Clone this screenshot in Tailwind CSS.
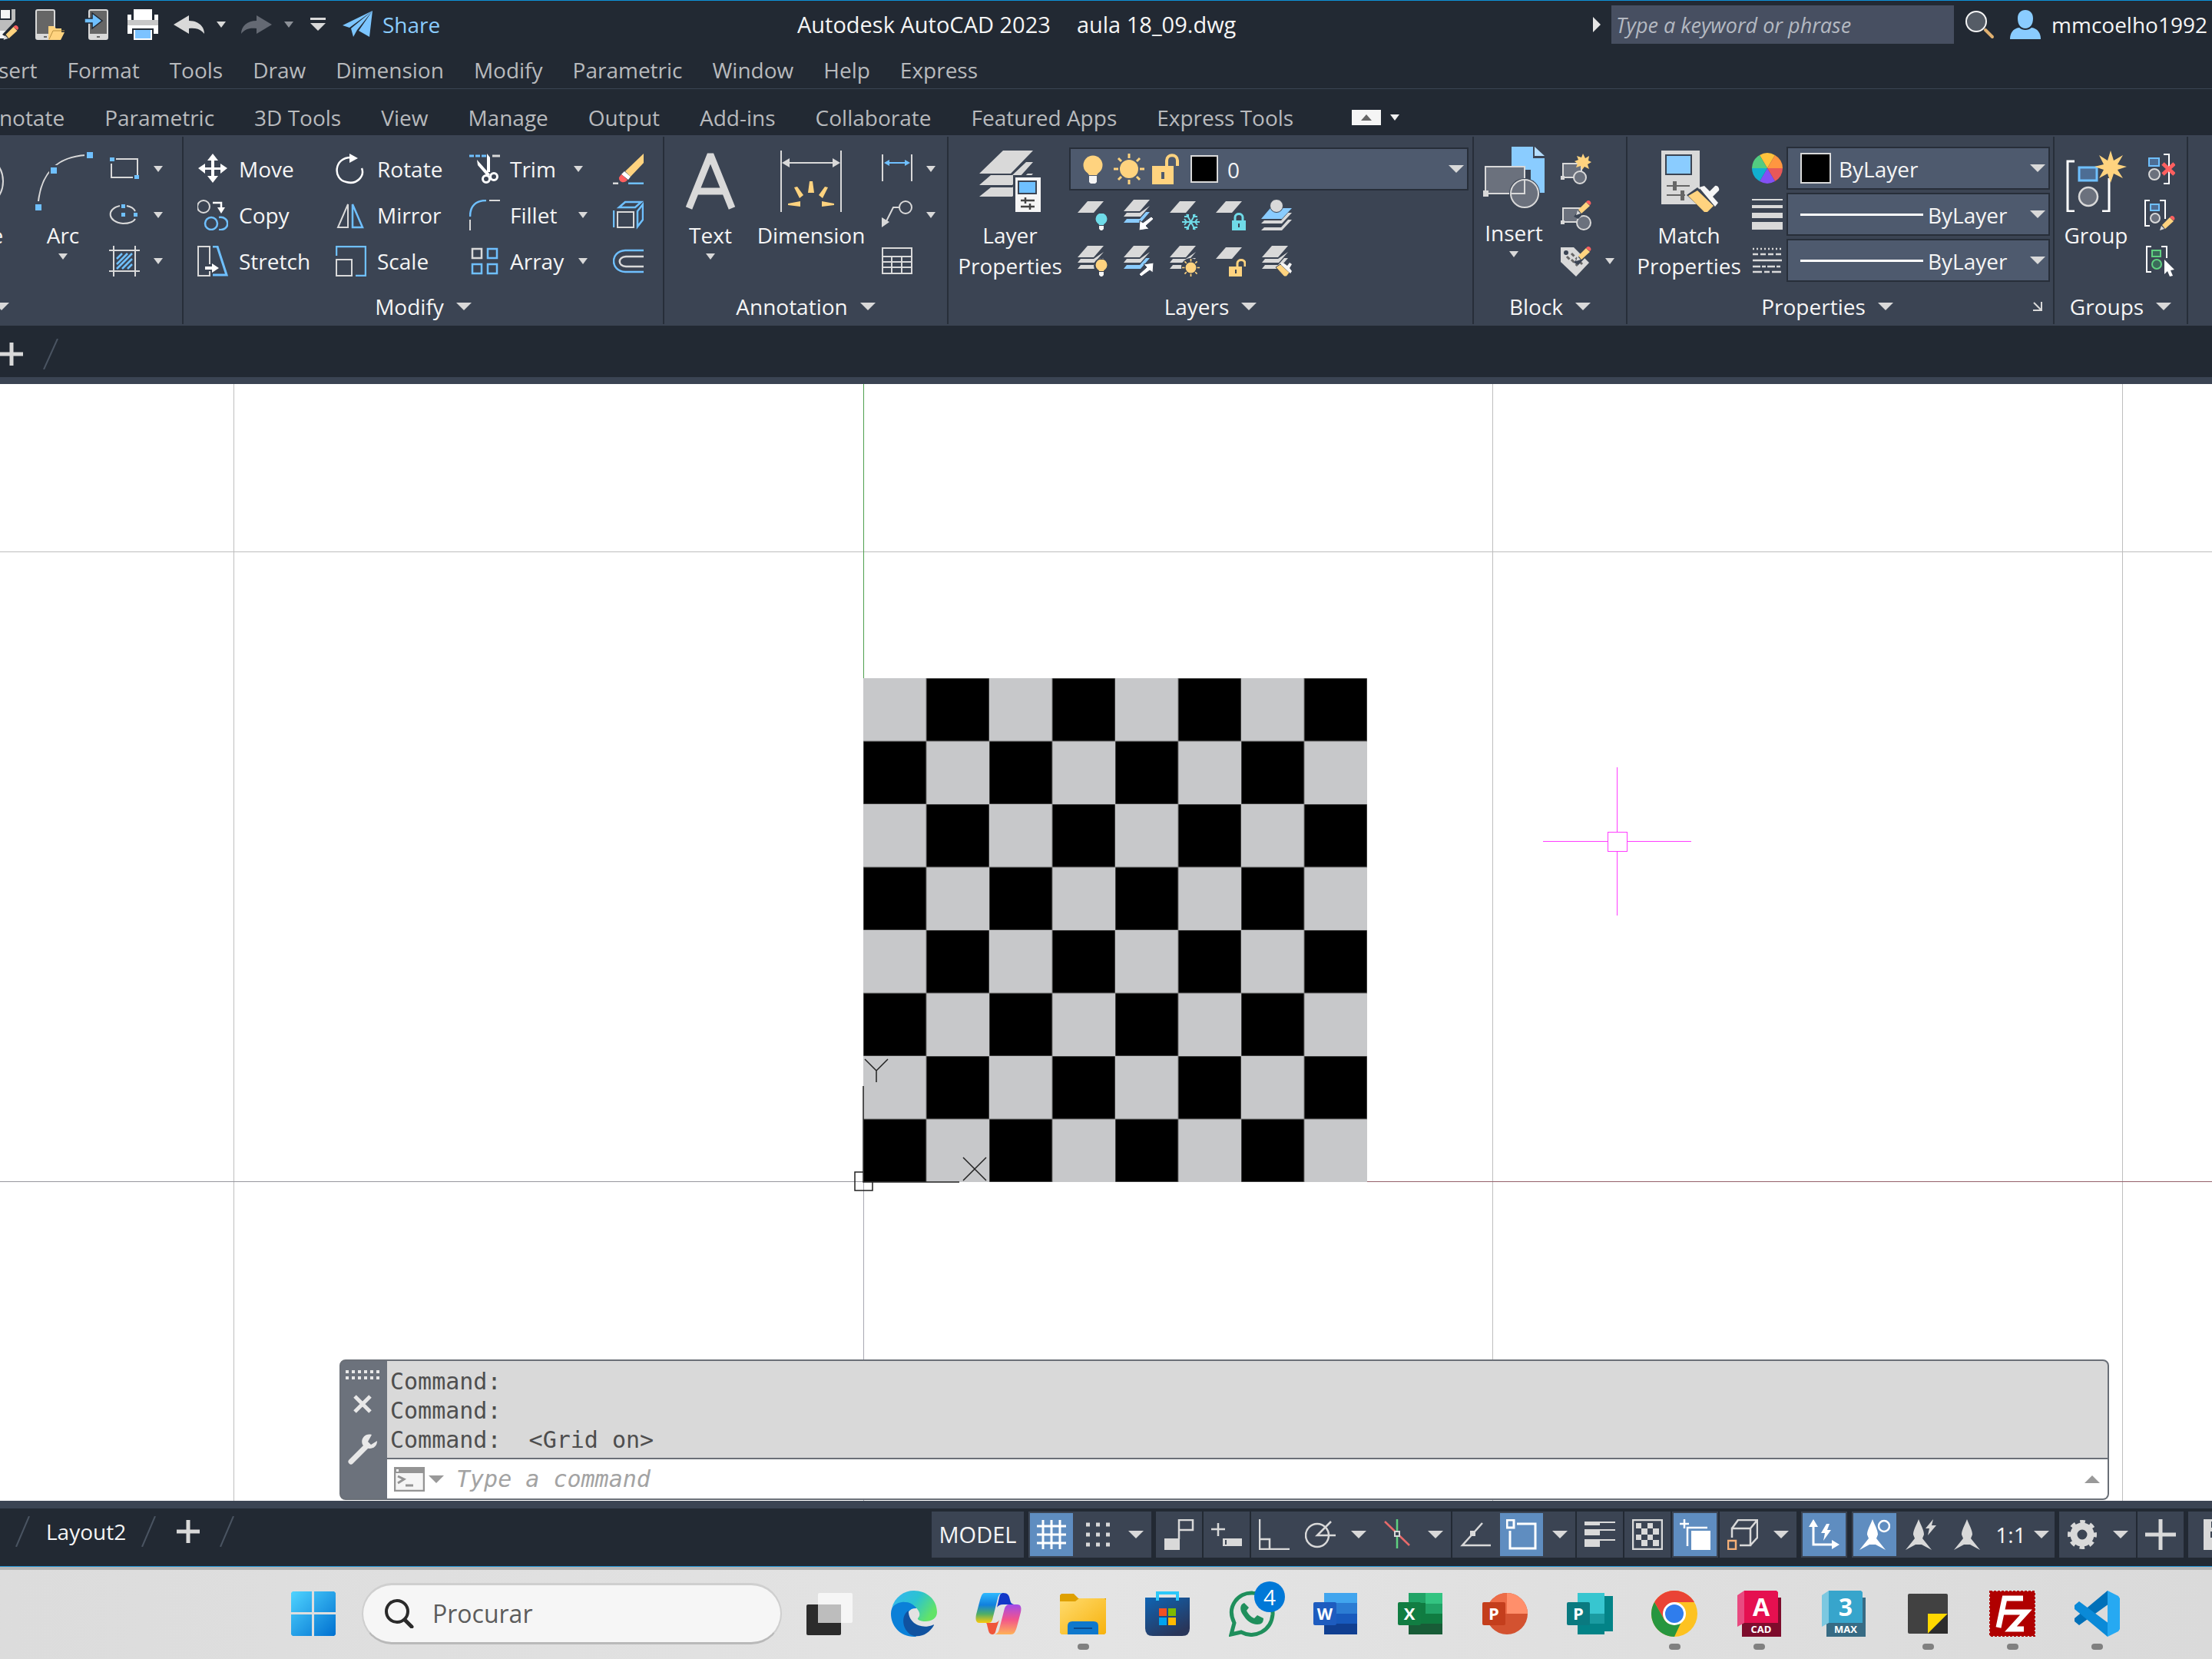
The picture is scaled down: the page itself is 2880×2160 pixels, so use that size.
<!DOCTYPE html>
<html lang="en">

<head>
    <meta charset="UTF-8">
    <meta name="viewport" content="width=device-width, initial-scale=1.0">
    <title>Autodesk AutoCAD 2023 - aula 18_09.dwg</title>
    <script src="https://cdn.jsdelivr.net/npm/@tailwindcss/browser@4"></script>
</head>

<body class="flex h-screen flex-col overflow-hidden bg-[#222933] font-['Open_Sans',sans-serif] text-[28px] leading-[40px] text-[#f5f5f5]">

    <!-- Shared icon parts -->
    <svg class="absolute h-0 w-0">
        <symbol id="caret" viewBox="0 0 20 10" preserveAspectRatio="none"><path d="M0 0h20L10 10z" fill="currentColor" /></symbol>
        <symbol id="pencil" viewBox="0 0 20 20">
            <path d="M0 20l2-6 4 4z" fill="#d9d9d9" />
            <path d="M3 13L13 3l5 5L7 18z" fill="#ffd37f" />
            <path d="M14 2c2-3 7 1 5 4l-1 1-5-4z" fill="#ff5f5f" />
        </symbol>
        <symbol id="sheet" viewBox="0 0 34 15"><path d="M13 0h21L21 15H0z" fill="currentColor" /></symbol>
        <symbol id="stack" viewBox="0 0 40 30">
            <path d="M14 0h21L22 15H1z" fill="#d9d9d9" />
            <path d="M35 8L23 22H1l4-5h17z" fill="#d9d9d9" />
            <path d="M35 16L23 30H1l4-5h17l8-9z" fill="currentColor" />
        </symbol>
        <symbol id="bulb" viewBox="0 0 16 22">
            <circle cx="8" cy="7" r="7.500" fill="currentColor" />
            <path d="M3 9h10l-2 6H5z" fill="currentColor" />
            <path d="M5 16h6v4l-2 2H7l-2-2z" fill="#f5f5f5" />
        </symbol>
        <symbol id="sun" viewBox="0 0 40 40">
            <circle cx="20" cy="20" r="12" fill="#ffd37f" />
            <path d="M20 0v6M20 34v6M0 20h6M34 20h6M6 6l4 4M30 30l4 4M34 6l-4 4M10 30l-4 4" stroke="#ffd37f" stroke-width="3" />
        </symbol>
        <symbol id="block" viewBox="0 0 40 40">
            <path d="M3 13h24v18H3z" fill="#6b717d" stroke="#d9d9d9" stroke-width="2" />
            <path d="M0 29h5v5H0z" fill="#d9d9d9" />
        </symbol>
        <symbol id="compass" viewBox="0 0 40 40">
            <path d="M20 0c3 8 7 14 7 20l-2 5 12 15-13-7h-8L3 40l12-15-2-5c0-6 4-12 7-20z" fill="currentColor" />
        </symbol>
        <defs>
            <linearGradient id="winGrad" x1="0" y1="0" x2="1" y2="1"><stop offset="0" stop-color="#4fd4ff" /><stop offset="1" stop-color="#0070d0" /></linearGradient>
            <linearGradient id="edgeTop" x1="0" y1="0" x2="1" y2=".5"><stop offset="0" stop-color="#35b4f5" /><stop offset=".55" stop-color="#2cc3d0" /><stop offset="1" stop-color="#62e368" /></linearGradient>
            <linearGradient id="copLeft" x1="0" y1="0" x2="0" y2="1"><stop offset="0" stop-color="#2fb9ff" /><stop offset=".4" stop-color="#1180dd" /><stop offset=".7" stop-color="#4fae67" /><stop offset="1" stop-color="#fcca0a" /></linearGradient>
            <linearGradient id="copRight" x1="0" y1="0" x2="0" y2="1"><stop offset="0" stop-color="#a24bea" /><stop offset=".5" stop-color="#f2548c" /><stop offset="1" stop-color="#ffb257" /></linearGradient>
            <linearGradient id="folder" x1="0" y1="0" x2="1" y2="1"><stop offset="0" stop-color="#ffdb6e" /><stop offset="1" stop-color="#f7b20c" /></linearGradient>
            <linearGradient id="store" x1="0" y1="0" x2=".6" y2="1"><stop offset="0" stop-color="#0f64b4" /><stop offset="1" stop-color="#29365a" /></linearGradient>
        </defs>
    </svg>

    <!-- Title bar -->
    <header class="flex h-[69px] shrink-0 items-start border-t border-[#0d92d8] pt-[11px] whitespace-nowrap">
        <div class="flex items-center gap-5 text-[#d9d9d9]">
            <button aria-label="Save As"><svg class="h-10 w-[26px]" viewBox="0 0 26 40">
                <path d="M0 0h20v22l-8 10H0z" fill="#bdbdbd" /><path d="M0 0h14v13H0z" fill="#f5f5f5" stroke="#222933" stroke-width="2" /><path d="M0 28h8v10H0z" fill="#f5f5f5" />
                <path d="M3 33L20 15l6 6-14 18z" fill="#222933" /><use href="#pencil" x="4" y="20" width="21" height="20" />
            </svg></button>
            <button aria-label="Open from Web and Mobile"><svg class="h-10 w-10" viewBox="0 0 40 40">
                <rect x="1" y="1" width="24" height="38" rx="2" fill="#666" stroke="#d9d9d9" stroke-width="2" /><path d="M1 32h24v7H1z" fill="#d9d9d9" /><path d="M11 35h4v2h-4z" fill="#666" />
                <path d="M17 22h7l3 3h7v5h4l-5 10H17z" fill="#ffd37f" /><path d="M18 39l5-11h15" fill="none" stroke="#b98f3f" stroke-width="1" />
            </svg></button>
            <button aria-label="Save to Web and Mobile"><svg class="h-10 w-10" viewBox="0 0 40 40">
                <rect x="10" y="1" width="24" height="38" rx="2" fill="#666" stroke="#d9d9d9" stroke-width="2" /><path d="M10 32h24v7H10z" fill="#d9d9d9" /><path d="M20 35h4v2h-4z" fill="#666" />
                <path d="M4 12h10V5l13 10-13 10v-7H4z" fill="#6fc0ff" stroke="#222933" stroke-width="1.500" />
            </svg></button>
            <button aria-label="Plot"><svg class="h-10 w-10" viewBox="0 0 40 40">
                <path d="M0 7h5v13H0zM35 7h5v13h-5z" fill="#fff" /><path d="M8 0h24v19H8z" fill="#fff" /><path d="M0 14h40v7H0z" fill="#c8c8c8" /><path d="M0 21h40v11h-6v-7H6v7H0z" fill="#fff" />
                <path d="M8 27h24v13H8z" fill="#fff" /><path d="M10 27h20v11H10z" fill="#7cc3ff" />
            </svg></button>
            <div class="flex items-center gap-4">
                <button aria-label="Undo"><svg class="h-10 w-10" viewBox="0 0 40 40"><path d="M0 20L20 8v7c12 0 20 7 20 17-5-6-10-8-20-7v7z" fill="currentColor" /></svg></button>
                <button aria-label="Undo list"><svg class="h-2 w-3"><use href="#caret" /></svg></button>
            </div>
            <div class="flex items-center gap-4 text-[#646973]">
                <button aria-label="Redo"><svg class="h-10 w-10" viewBox="0 0 40 40"><path d="M40 20L20 8v7C8 15 0 22 0 32c5-6 10-8 20-7v7z" fill="currentColor" /></svg></button>
                <button aria-label="Redo list" class="text-[#8d9198]"><svg class="h-2 w-3"><use href="#caret" /></svg></button>
            </div>
            <button aria-label="Customize Quick Access Toolbar"><svg class="h-10 w-6" viewBox="0 0 24 40"><path d="M2 11h20v3H2zM2 18h20L12 28z" fill="currentColor" /></svg></button>
            <button class="flex items-center gap-3 text-[#8accff]">
                <svg class="h-10 w-10" viewBox="0 0 40 40"><path d="M39 2L0 21l9 3zM39 2L11 25l3 11 5-9 20-25zM39 2L21 28l14 8z" fill="#7cc5ff" /></svg>
                Share
            </button>
        </div>
        <h1 class="flex-1 text-center text-[29px]"><span>Autodesk AutoCAD 2023</span><span class="ml-[34px]">aula 18_09.dwg</span></h1>
        <div class="flex items-center pr-[6px]">
            <svg class="mr-[14px] h-5 w-[10px]" viewBox="0 0 10 20"><path d="M0 0l10 10L0 20z" fill="#e6e6e6" /></svg>
            <input type="text" aria-label="Search help" placeholder="Type a keyword or phrase" class="-my-[5px] mr-[14px] h-[50px] w-[446px] bg-[#474f61] px-[6px] text-[27px] font-medium italic placeholder:text-[#b4b9c1]">
            <button aria-label="Search"><svg class="h-10 w-10" viewBox="0 0 40 40"><circle cx="15" cy="16" r="13" fill="#555c66" stroke="#f5f5f5" stroke-width="2" /><path d="M27 27l9 9" stroke="#e0b070" stroke-width="4" stroke-linecap="round" /></svg></button>
            <a href="#" class="ml-[19px] flex items-center gap-[14px]">
                <svg class="h-10 w-10" viewBox="0 0 40 40"><path d="M20 1c6 0 10 4 10 11 0 8-4 13-10 13S10 20 10 12C10 5 14 1 20 1zM0 39c0-8 4-14 12-15 4 4 12 4 16 0 8 1 12 7 12 15z" fill="#8accff" /></svg>
                mmcoelho1992
            </a>
        </div>
    </header>

    <!-- Menu bar -->
    <nav class="flex h-[47px] shrink-0 gap-[39px] border-b border-[#3b4453] pt-[2px] text-[#b8babd]">
        <a href="#" class="-ml-[27px]">Insert</a>
        <a href="#">Format</a>
        <a href="#">Tools</a>
        <a href="#">Draw</a>
        <a href="#">Dimension</a>
        <a href="#">Modify</a>
        <a href="#">Parametric</a>
        <a href="#">Window</a>
        <a href="#">Help</a>
        <a href="#">Express</a>
    </nav>

    <!-- Ribbon tabs -->
    <nav class="flex h-[60px] shrink-0 items-center gap-[52px] pt-[14px] whitespace-nowrap text-[#b8babd]">
        <a href="#" class="-ml-[36px]">Annotate</a>
        <a href="#">Parametric</a>
        <a href="#">3D Tools</a>
        <a href="#">View</a>
        <a href="#">Manage</a>
        <a href="#">Output</a>
        <a href="#">Add-ins</a>
        <a href="#">Collaborate</a>
        <a href="#">Featured Apps</a>
        <a href="#">Express Tools</a>
        <div class="ml-6 flex items-center gap-3 text-[#f0f0f0]">
            <button aria-label="Minimize ribbon" class="flex h-5 w-[38px] items-center justify-center bg-[#f5f5f5] text-[#666]"><svg class="h-2 w-[14px] rotate-180"><use href="#caret" /></svg></button>
            <button aria-label="Ribbon options"><svg class="h-2 w-3"><use href="#caret" /></svg></button>
        </div>
    </nav>

    <!-- Ribbon -->
    <section class="flex h-[248px] shrink-0 bg-[#3b4453] py-[2px] whitespace-nowrap">

        <!-- Draw -->
        <div class="flex w-[239px] shrink-0 flex-col border-r-2 border-[#272e39]">
            <div class="flex flex-1">
                <button class="-ml-[72px] flex w-20 shrink-0 flex-col items-center pt-[18px]">
                    <svg class="mb-[10px] h-20 w-20" viewBox="0 0 80 80"><circle cx="40" cy="40" r="36" fill="none" stroke="#d9d9d9" stroke-width="2" /></svg>
                    Circle
                </button>
                <button class="ml-[30px] flex w-[88px] flex-col items-center pt-[18px] text-center">
                    <svg class="mb-[10px] h-20 w-20" viewBox="0 0 80 80"><path d="M8 66C12 30 32 8 70 6" fill="none" stroke="#d9d9d9" stroke-width="2" /><path d="M3 68h10v10H3zM22 19h12v12H22zM68 1h12v10H68z" fill="#3b4453" /><path d="M4 70h8v8H4zM24 22h8v8h-8zM71 2h8v8h-8z" fill="#6fc0ff" /></svg>
                    Arc
                    <svg class="mt-1 h-2 w-3 text-[#d9d9d9]"><use href="#caret" /></svg>
                </button>
                <div class="ml-4 grid auto-rows-[40px] gap-5 pt-[22px] text-[#d9d9d9]">
                    <button class="flex items-center gap-[18px]" aria-label="Rectangle"><svg class="h-10 w-10" viewBox="0 0 40 40"><path d="M9 7h28v21M31 31H3V13" fill="none" stroke="#d9d9d9" stroke-width="2" /><path d="M1 5h6v5H1zM33 28h6v5h-6z" fill="#6fc0ff" /></svg><svg class="h-2 w-3"><use href="#caret" /></svg></button>
                    <button class="flex items-center gap-[18px]" aria-label="Ellipse"><svg class="h-10 w-10" viewBox="0 0 40 40"><path d="M14 8C-4 12-2 29 18 31c8 0 14-2 16-6M23 8c6 1 9 3 11 7" fill="none" stroke="#d9d9d9" stroke-width="2" /><path d="M16 6h5v5h-5zM16 17h5v5h-5zM32 17h5v5h-5z" fill="#6fc0ff" /></svg><svg class="h-2 w-3"><use href="#caret" /></svg></button>
                    <button class="flex items-center gap-[18px]" aria-label="Hatch"><svg class="h-10 w-10" viewBox="0 0 40 40"><path d="M0 6h40M0 33h40M6 0v40M34 0v40" stroke="#d9d9d9" stroke-width="2" /><path d="M10 17l7-7M10 24l14-14M10 30l20-20M17 30l13-13M24 30l6-6" stroke="#6fc0ff" stroke-width="2.500" /></svg><svg class="h-2 w-3"><use href="#caret" /></svg></button>
                </div>
            </div>
            <button class="-ml-[93px] flex h-[46px] items-center gap-4 self-start">Draw <svg class="h-[10px] w-5 text-[#d9d9d9]"><use href="#caret" /></svg></button>
        </div>

        <!-- Modify -->
        <div class="flex w-[626px] shrink-0 flex-col border-r-2 border-[#272e39]">
            <div class="grid flex-1 auto-rows-[40px] grid-cols-[180px_174px_187px_40px] gap-y-5 pt-[22px] pl-[18px]">
                <button class="flex items-center gap-[14px]"><svg class="h-10 w-10" viewBox="0 0 40 40"><path d="M20 0l7 9h-5v9h8v-5l9 6-9 7v-5h-8v8h5l-7 9-7-9h5v-8h-8v5l-9-7 9-6v5h8V9h-5z" fill="#fff" /></svg>Move</button>
                <button class="flex items-center gap-[14px]"><svg class="h-10 w-10" viewBox="0 0 40 40"><path d="M21 5C-3 4-4 34 14 37c14 4 24-8 20-18" fill="none" stroke="#fff" stroke-width="2.500" /><path d="M18 0l11 6-11 6z" fill="#fff" /></svg>Rotate</button>
                <button class="flex w-[154px] items-center justify-between pr-[6px]"><span class="flex gap-[13px]"><svg class="h-10 w-10" viewBox="0 0 40 40"><path d="M0 3h22" stroke="#6fc0ff" stroke-width="3" stroke-dasharray="6 2" /><path d="M30 3h10" stroke="#d9d9d9" stroke-width="3" /><path d="M23 0l4 5v19h-4zM10 8l17 19-3 3-13-15z" fill="#fff" /><circle cx="22" cy="33" r="4.500" fill="none" stroke="#fff" stroke-width="3" /><circle cx="32" cy="30" r="4.500" fill="none" stroke="#fff" stroke-width="3" /></svg>Trim</span><svg class="h-2 w-3 text-[#d9d9d9]"><use href="#caret" /></svg></button>
                <button aria-label="Erase"><svg class="h-10 w-10" viewBox="0 0 40 40"><path d="M40 0v12L23 30l-7-7z" fill="#ffd37f" /><path d="M15 23l8 7-3 4-9-7z" fill="#fff" /><path d="M11 27l8 7c-4 6-12 3-11-3z" fill="#ff5f5f" /><path d="M0 39h7" stroke="#d9d9d9" stroke-width="3" /><path d="M20 39h20" stroke="#6fc0ff" stroke-width="3" /></svg></button>

                <button class="flex items-center gap-[14px]"><svg class="h-10 w-10" viewBox="0 0 40 40"><circle cx="8" cy="9" r="8" fill="none" stroke="#d9d9d9" stroke-width="2" /><path d="M20 4h11v8" fill="none" stroke="#fff" stroke-width="2.500" /><path d="M26 10h10l-5 8z" fill="#fff" /><circle cx="18" cy="31" r="8" fill="none" stroke="#6fc0ff" stroke-width="2.500" /><path d="M28 23c15-2 15 18 0 16" fill="none" stroke="#6fc0ff" stroke-width="2.500" /></svg>Copy</button>
                <button class="flex items-center gap-[14px]"><svg class="h-10 w-10" viewBox="0 0 40 40"><path d="M16 6v30H3z" fill="none" stroke="#d9d9d9" stroke-width="2" /><path d="M22 6v30h13z" fill="none" stroke="#6fc0ff" stroke-width="2.500" /></svg>Mirror</button>
                <button class="flex w-[154px] items-center justify-between"><span class="flex gap-[13px]"><svg class="h-10 w-10" viewBox="0 0 40 40"><path d="M1 22C1 8 9 1 22 1" fill="none" stroke="#6fc0ff" stroke-width="2.500" /><path d="M26 1h14M1 26v14" stroke="#d9d9d9" stroke-width="2" /></svg>Fillet</span><svg class="h-2 w-3 text-[#d9d9d9]"><use href="#caret" /></svg></button>
                <button aria-label="Explode"><svg class="h-10 w-10" viewBox="0 0 40 40"><path d="M6 16h21v20H6z" fill="none" stroke="#d9d9d9" stroke-width="2" /><path d="M1 14v22M8 10l8-7h21l-8 7zM32 15l7-9v20l-7 9z" fill="none" stroke="#6fc0ff" stroke-width="2.500" /></svg></button>

                <button class="flex items-center gap-[14px]"><svg class="h-10 w-10" viewBox="0 0 40 40"><path d="M16 24V1H1v38h15v-6" fill="none" stroke="#d9d9d9" stroke-width="2" /><path d="M20 1h6l12 37H20" fill="none" stroke="#6fc0ff" stroke-width="3" /><path d="M10 27h9v-4l9 6-9 6v-4h-9z" fill="#fff" /></svg>Stretch</button>
                <button class="flex items-center gap-[14px]"><svg class="h-10 w-10" viewBox="0 0 40 40"><path d="M1 13V1h38v38H26" fill="none" stroke="#6fc0ff" stroke-width="2.500" /><path d="M1 18h20v21H1z" fill="none" stroke="#d9d9d9" stroke-width="2" /></svg>Scale</button>
                <button class="flex w-[154px] items-center justify-between"><span class="flex gap-[13px]"><svg class="h-10 w-10" viewBox="0 0 40 40" fill="none" stroke-width="2.500"><path d="M4 4h12v12H4z" stroke="#d9d9d9" /><path d="M24 4h12v12H24zM4 24h12v12H4zM24 24h12v12H24z" stroke="#6fc0ff" /></svg>Array</span><svg class="h-2 w-3 text-[#d9d9d9]"><use href="#caret" /></svg></button>
                <button aria-label="Offset"><svg class="h-10 w-10" viewBox="0 0 40 40"><path d="M40 6H16C-4 7-4 33 16 34h24" fill="none" stroke="#6fc0ff" stroke-width="2.500" /><path d="M40 14H17C6 15 6 26 17 27h23" fill="none" stroke="#d9d9d9" stroke-width="2.500" /></svg></button>
            </div>
            <button class="flex h-[46px] items-center justify-center gap-4">Modify <svg class="h-[10px] w-5 text-[#d9d9d9]"><use href="#caret" /></svg></button>
        </div>

        <!-- Annotation -->
        <div class="flex w-[370px] shrink-0 flex-col border-r-2 border-[#272e39]">
            <div class="flex flex-1 pl-[10px]">
                <button class="flex w-[100px] flex-col items-center pt-[18px]">
                    <svg class="mb-[10px] h-20 w-20" viewBox="0 0 80 80" aria-hidden="true"><path d="M12 75L39 8h2l27 67M22 53h36" fill="none" stroke="#d9d9d9" stroke-width="9" /></svg>
                    Text
                    <svg class="mt-1 h-2 w-3 text-[#d9d9d9]"><use href="#caret" /></svg>
                </button>
                <button class="ml-[11px] flex w-[140px] flex-col items-center pt-[18px]">
                    <svg class="mb-[10px] h-20 w-20" viewBox="0 0 80 80"><path d="M1 0v80M79 0v80M6 16h68" stroke="#d9d9d9" stroke-width="2" /><path d="M2 16l10-6v12zM78 16l-10-6v12z" fill="#d9d9d9" /><path d="M38 40h4l2 15h-8zM18 48l4-1 8 11-5 4zM62 48l-4-1-8 11 5 4zM10 69l16-3v7l-16-2zM70 69l-16-3v7l16-2z" fill="#ffd37f" /></svg>
                    Dimension
                </button>
                <div class="ml-[22px] grid auto-rows-[40px] gap-5 pt-[22px] text-[#d9d9d9]">
                    <button class="flex items-center gap-[18px]" aria-label="Linear"><svg class="h-10 w-10" viewBox="0 0 40 40"><path d="M1 1v35M39 1v35" stroke="#d9d9d9" stroke-width="2" /><path d="M8 12h24" stroke="#6fc0ff" stroke-width="2" /><path d="M3 12l7-4v8zM37 12l-7-4v8z" fill="#6fc0ff" /></svg><svg class="h-2 w-3"><use href="#caret" /></svg></button>
                    <button class="flex items-center gap-[18px]" aria-label="Leader"><svg class="h-10 w-10" viewBox="0 0 40 40"><circle cx="31" cy="10" r="8" fill="none" stroke="#d9d9d9" stroke-width="2" /><path d="M23 10h-8L5 30" fill="none" stroke="#d9d9d9" stroke-width="2" /><path d="M0 36V23l10 6z" fill="#d9d9d9" /></svg><svg class="h-2 w-3"><use href="#caret" /></svg></button>
                    <button aria-label="Table"><svg class="h-10 w-10" viewBox="0 0 40 40"><path d="M1 3h38v33H1zM1 14h38M1 21h38M1 28h38M13 14v22M26 14v22" fill="none" stroke="#d9d9d9" stroke-width="2" /></svg></button>
                </div>
            </div>
            <button class="flex h-[46px] items-center justify-center gap-4">Annotation <svg class="h-[10px] w-5 text-[#d9d9d9]"><use href="#caret" /></svg></button>
        </div>

        <!-- Layers -->
        <div class="flex w-[684px] shrink-0 flex-col border-r-2 border-[#272e39]">
            <div class="flex flex-1 pl-[5px]">
                <button class="flex w-[150px] flex-col items-center pt-[18px]">
                    <svg class="mb-[10px] h-20 w-20" viewBox="0 0 80 80">
                        <path d="M31 0h39L41 30H0zM0 45l15-13h28l18-17h9L43 45zM0 60l15-12h28l20-18h7L43 60z" fill="#d9d9d9" />
                        <path d="M44 32h36v48H44z" fill="#3b4453" /><path d="M47 35h33v45H47z" fill="#f5f5f5" /><path d="M51 40h23v16H51z" fill="#6fc0ff" stroke="#3b4453" stroke-width="2" /><path d="M54 65h18M54 73h18M60 61v8M66 69v8" stroke="#444" stroke-width="2.500" />
                    </svg>
                    <span>Layer<br>Properties</span>
                </button>
                <div class="ml-[2px] pt-[14px]">
                    <div class="flex h-14 w-[520px] items-center border-2 border-[#272e39] bg-[#4e5a6e] pr-1 pl-[14px]">
                        <svg class="h-10 w-8" viewBox="0 0 32 40"><circle cx="15" cy="15" r="12.500" fill="#ffd37f" /><path d="M6 22h18l-4 6H10z" fill="#ffd37f" /><path d="M10 29h10v8l-2 2h-6l-2-2z" fill="#f5f5f5" /></svg>
                        <svg class="ml-[10px] h-10 w-10"><use href="#sun" /></svg>
                        <svg class="ml-2 h-10 w-10" viewBox="0 0 40 40"><path d="M2 16h28v24H2z" fill="#ffd37f" /><path d="M21 16V9c0-9 14-9 14 0v7" fill="none" stroke="#ffd37f" stroke-width="4" /><path d="M14 24h4v9h-4z" fill="#4e5a6e" /></svg>
                        <span class="ml-3 h-9 w-9 border-2 border-[#d9d9d9] bg-black"></span>
                        <select aria-label="Current layer" class="ml-2 min-w-0 flex-1 appearance-none bg-transparent pt-[2px] pl-1"><option>0</option></select>
                        <svg class="h-[10px] w-5 text-[#d9d9d9]"><use href="#caret" /></svg>
                    </div>
                    <div class="mt-3 ml-[10px] grid auto-rows-[40px] grid-cols-[repeat(5,40px)] gap-5 text-[#d9d9d9]">
                        <button aria-label="Layer off"><svg class="h-10 w-10" viewBox="0 0 40 40"><use href="#sheet" x="1" y="2" width="34" height="15" /><use href="#bulb" x="24" y="18" width="16" height="22" class="text-[#6fdbe8]" /></svg></button>
                        <button aria-label="Isolate"><svg class="h-10 w-10" viewBox="0 0 40 40"><use href="#stack" width="40" height="30" class="text-[#8accff]" /><path d="M21 40l1-13 4 3 11-8 3 3-10 9 4 4z" fill="#fff" stroke="#3b4453" stroke-width="1" /></svg></button>
                        <button aria-label="Freeze"><svg class="h-10 w-10" viewBox="0 0 40 40"><use href="#sheet" x="1" y="2" width="34" height="15" /><path d="M17 29h23M23 19l11 20M34 19L23 39M20 25l3 4-3 4M37 25l-3 4 3 4M20 22h5v-3M37 22h-5v-3M20 36h5v3M37 36h-5v3" fill="none" stroke="#6fdbe8" stroke-width="2" /></svg></button>
                        <button aria-label="Lock"><svg class="h-10 w-10" viewBox="0 0 40 40"><use href="#sheet" x="1" y="2" width="34" height="15" /><path d="M22 27h18v13H22z" fill="#6fdbe8" /><path d="M26 27v-4c0-6 10-6 10 0v4" fill="none" stroke="#6fdbe8" stroke-width="3" /><path d="M30 31h2v5h-2z" fill="#3b4453" /></svg></button>
                        <button aria-label="Make current"><svg class="h-10 w-10" viewBox="0 0 40 40"><path d="M12 11h28L27 25H0z" fill="#8accff" /><path d="M40 17L27 31H0l4-4h22l9-10zM40 26L27 40H0l4-4h22l9-10z" fill="#d9d9d9" /><circle cx="20" cy="8" r="8.500" fill="#d9d9d9" stroke="#3b4453" stroke-width="1" /></svg></button>
                        <button aria-label="Turn all layers on"><svg class="h-10 w-10" viewBox="0 0 40 40"><use href="#stack" width="40" height="30" /><circle cx="32" cy="26" r="10" fill="#3b4453" /><use href="#bulb" x="24" y="18" width="16" height="22" class="text-[#ffd37f]" /></svg></button>
                        <button aria-label="Unisolate"><svg class="h-10 w-10" viewBox="0 0 40 40"><use href="#stack" width="40" height="30" class="text-[#8accff]" /><path d="M40 22l-1 13-4-3-11 8-3-3 10-9-4-4z" fill="#fff" stroke="#3b4453" stroke-width="1" /></svg></button>
                        <button aria-label="Thaw all layers"><svg class="h-10 w-10" viewBox="0 0 40 40"><use href="#stack" width="40" height="30" /><circle cx="28" cy="28" r="12" fill="#3b4453" /><use href="#sun" x="17" y="17" width="23" height="23" /></svg></button>
                        <button aria-label="Unlock"><svg class="h-10 w-10" viewBox="0 0 40 40"><use href="#sheet" x="1" y="2" width="34" height="15" /><path d="M18 27h17v13H18z" fill="#ffd37f" /><path d="M29 27v-4c0-6 10-6 10 0v4" fill="none" stroke="#ffd37f" stroke-width="3" /><path d="M26 31h2v5h-2z" fill="#3b4453" /></svg></button>
                        <button aria-label="Match layer"><svg class="h-10 w-10" viewBox="0 0 40 40"><use href="#stack" width="40" height="30" /><path d="M19 28l6-4 12 11-4 5h-3z" fill="#ffd37f" stroke="#3b4453" stroke-width="1" /><path d="M26 22l4 1 4 3 3-4 3 2-3 5 3 4-2 3-12-11z" fill="#f5f5f5" /></svg></button>
                    </div>
                </div>
            </div>
            <button class="flex h-[46px] items-center justify-center gap-4">Layers <svg class="h-[10px] w-5 text-[#d9d9d9]"><use href="#caret" /></svg></button>
        </div>

        <!-- Block -->
        <div class="flex w-[200px] shrink-0 flex-col border-r-2 border-[#272e39]">
            <div class="flex flex-1 pl-2">
                <button class="flex w-[88px] flex-col items-center pt-[13px]">
                    <svg class="mb-[12px] h-20 w-20" viewBox="0 0 80 80">
                        <path d="M37 0h28v15h15v45H62V30H37z" fill="#8accff" /><path d="M67 0l13 12H67z" fill="#b5deff" />
                        <path d="M3 26h51v35H3z" fill="#6b717d" stroke="#d9d9d9" stroke-width="2" /><path d="M0 57h7v8H0z" fill="#d9d9d9" />
                        <circle cx="54" cy="61" r="20" fill="#3b4453" /><circle cx="54" cy="61" r="18" fill="#6b717d" stroke="#d9d9d9" stroke-width="2" /><path d="M37 61h17V43" fill="none" stroke="#d9d9d9" stroke-width="2" />
                    </svg>
                    Insert
                    <svg class="mt-1 h-2 w-3 text-[#d9d9d9]"><use href="#caret" /></svg>
                </button>
                <div class="ml-[17px] grid auto-rows-[40px] gap-5 pt-[22px] text-[#d9d9d9]">
                    <button aria-label="Create block"><svg class="h-10 w-10" viewBox="0 0 40 40"><use href="#block" width="40" height="40" /><circle cx="25" cy="31" r="8" fill="#6b717d" stroke="#d9d9d9" stroke-width="2" /><path d="M29 0l3 6 5-3-1 6 4 2-5 3 2 6-6-3-3 4-2-5-6 2 2-5-4-3 5-2-2-5 6 2z" fill="#ffd37f" /></svg></button>
                    <button aria-label="Edit block"><svg class="h-10 w-10" viewBox="0 0 40 40"><use href="#block" y="-2" width="40" height="40" /><circle cx="30" cy="30" r="9" fill="#6b717d" stroke="#d9d9d9" stroke-width="2" /><path d="M17 22L34 1l6 6-17 18z" fill="#3b4453" /><use href="#pencil" x="20" y="0" width="20" height="20" /></svg></button>
                    <button class="flex items-center gap-[18px]" aria-label="Edit attributes"><svg class="h-10 w-10" viewBox="0 0 40 40"><path d="M0 2h17l20 20-17 18L0 21z" fill="#d9d9d9" /><circle cx="7" cy="9" r="3" fill="#3b4453" /><path d="M8 14l4 4M14 18l8 8M14 10l14 14" stroke="#666" stroke-width="3" stroke-dasharray="5 3" /><path d="M17 22L34 1l6 6-17 18z" fill="#3b4453" /><use href="#pencil" x="20" y="0" width="20" height="20" /></svg><svg class="h-2 w-3"><use href="#caret" /></svg></button>
                </div>
            </div>
            <button class="flex h-[46px] items-center justify-center gap-4">Block <svg class="h-[10px] w-5 text-[#d9d9d9]"><use href="#caret" /></svg></button>
        </div>

        <!-- Properties -->
        <div class="flex w-[556px] shrink-0 flex-col border-r-2 border-[#272e39]">
            <div class="flex flex-1">
                <button class="flex w-40 flex-col items-center pt-[18px]">
                    <svg class="mb-[10px] h-20 w-20" viewBox="0 0 80 80">
                        <path d="M4 0h50v70H4z" fill="#d9d9d9" /><path d="M10 6h33v25H10z" fill="#8accff" stroke="#3b4453" stroke-width="2" /><path d="M11 46h30M11 58h24" stroke="#666" stroke-width="2" /><path d="M19 40h5v12h-5zM29 52h5v13h-5z" fill="#666" />
                        <path d="M37 58l14-10 25 23-12 12z" fill="#3b4453" /><path d="M39 59l12-7 21 20-8 8h-4z" fill="#ffd37f" /><path d="M53 48l7-2 7 7 7-7c4-1 6 4 5 6l-8 8 7 8-4 5z" fill="#f5f5f5" />
                    </svg>
                    <span>Match<br>Properties</span>
                </button>
                <div class="ml-[2px] grid auto-rows-[60px] grid-cols-[40px_343px] items-center gap-x-[5px] pt-[11px]">
                    <svg class="h-10 w-10" viewBox="0 0 40 40"><path d="M20 20L10 3a20 20 0 0120 0z" fill="#ffc23c" /><path d="M20 20L30 3a20 20 0 0110 17z" fill="#ff9640" /><path d="M20 20h20a20 20 0 01-10 17z" fill="#e85858" /><path d="M20 20l10 17a20 20 0 01-20 0z" fill="#8450f5" /><path d="M20 20L10 37A20 20 0 010 20z" fill="#12b0cf" /><path d="M20 20H0A20 20 0 0110 3z" fill="#53cc80" /></svg>
                    <div class="flex h-14 items-center gap-[10px] border-2 border-[#272e39] bg-[#4e5a6e] pr-1 pl-4">
                        <span class="h-10 w-10 border-2 border-[#d9d9d9] bg-black"></span>
                        <select aria-label="Object color" class="min-w-0 flex-1 appearance-none bg-transparent pt-[2px]"><option>ByLayer</option></select>
                        <svg class="h-[10px] w-5 text-[#d9d9d9]"><use href="#caret" /></svg>
                    </div>
                    <svg class="h-10 w-10" viewBox="0 0 40 40"><path d="M0 0h40v2H0zM0 8h40v4H0zM0 18h40v7H0zM0 30h40v10H0z" fill="#d9d9d9" /></svg>
                    <div class="flex h-14 items-center gap-[6px] border-2 border-[#272e39] bg-[#4e5a6e] pr-1 pl-4">
                        <span class="h-[3px] w-40 bg-white"></span>
                        <select aria-label="Lineweight" class="min-w-0 flex-1 appearance-none bg-transparent pt-[2px]"><option>ByLayer</option></select>
                        <svg class="h-[10px] w-5 text-[#d9d9d9]"><use href="#caret" /></svg>
                    </div>
                    <svg class="h-10 w-10" viewBox="0 0 40 40" stroke="#d9d9d9" stroke-width="2.500"><path d="M1 5h38" stroke-dasharray="2 3" /><path d="M1 12h38" stroke-dasharray="7 3" /><path d="M1 20h38" /><path d="M1 28h38" stroke-dasharray="10 2 5 2" /><path d="M1 35h38" stroke-dasharray="12 3 7 3" /></svg>
                    <div class="flex h-14 items-center gap-[6px] border-2 border-[#272e39] bg-[#4e5a6e] pr-1 pl-4">
                        <span class="h-[3px] w-40 bg-white"></span>
                        <select aria-label="Linetype" class="min-w-0 flex-1 appearance-none bg-transparent pt-[2px]"><option>ByLayer</option></select>
                        <svg class="h-[10px] w-5 text-[#d9d9d9]"><use href="#caret" /></svg>
                    </div>
                </div>
            </div>
            <div class="flex h-[46px] items-center pr-[14px]">
                <button class="flex flex-1 items-center justify-center gap-4 pr-2">Properties <svg class="h-[10px] w-5 text-[#d9d9d9]"><use href="#caret" /></svg></button>
                <button aria-label="Properties palette"><svg class="h-3 w-3" viewBox="0 0 12 12"><path d="M1 1l9 9M11 0v11H0" fill="none" stroke="#d9d9d9" stroke-width="2" /></svg></button>
            </div>
        </div>

        <!-- Groups -->
        <div class="flex w-[174px] shrink-0 flex-col border-r-2 border-[#272e39]">
            <div class="flex flex-1 pl-[6px]">
                <button class="flex w-24 flex-col items-center pt-[18px]">
                    <svg class="mb-[10px] h-20 w-20" viewBox="0 0 80 80">
                        <path d="M12 14H3v65h9M48 79h9V36" fill="none" stroke="#fff" stroke-width="3" /><path d="M18 22h23v17H18z" fill="#4d6d94" stroke="#6fc0ff" stroke-width="3" /><circle cx="30" cy="60" r="12" fill="#6b717d" stroke="#d9d9d9" stroke-width="2.500" />
                        <path d="M59 0l4 13 12-7-7 12 12 3-12 4 7 11-12-6-4 12-4-12-11 6 6-11-12-4 12-3-6-12 11 7z" fill="#ffd37f" />
                    </svg>
                    Group
                </button>
                <div class="ml-[15px] grid auto-rows-[40px] gap-5 pt-[22px]">
                    <button aria-label="Ungroup"><svg class="h-10 w-10" viewBox="0 0 40 40"><path d="M25 1h7v38h-7" fill="none" stroke="#fff" stroke-width="2" /><path d="M6 6h13v10H6z" fill="#4d6d94" stroke="#6fc0ff" stroke-width="2" /><circle cx="13" cy="27" r="7" fill="#6b717d" stroke="#d9d9d9" stroke-width="2" /><path d="M24 13l15 14M39 13L24 27" stroke="#ff5f5f" stroke-width="5" /></svg></button>
                    <button aria-label="Group edit"><svg class="h-10 w-10" viewBox="0 0 40 40"><path d="M7 1H1v33h6M20 1h7v24" fill="none" stroke="#fff" stroke-width="2" /><path d="M8 6h11v8H8z" fill="#4d6d94" stroke="#6fc0ff" stroke-width="2" /><circle cx="14" cy="24" r="6" fill="#6b717d" stroke="#d9d9d9" stroke-width="2" /><use href="#pencil" x="20" y="20" width="20" height="20" /></svg></button>
                    <button aria-label="Group selection on"><svg class="h-10 w-10" viewBox="0 0 40 40"><path d="M9 1H3v33h6M22 1h7v15" fill="none" stroke="#fff" stroke-width="2" /><path d="M10 6h11v8H10z" fill="#3b6a5a" stroke="#5fd080" stroke-width="2" /><circle cx="16" cy="24" r="6" fill="#3b6a5a" stroke="#5fd080" stroke-width="2" /><path d="M26 18l13 13-5 1 3 7-4 1-3-7-4 4z" fill="#fff" /></svg></button>
                </div>
            </div>
            <button class="flex h-[46px] items-center justify-center gap-4">Groups <svg class="h-[10px] w-5 text-[#d9d9d9]"><use href="#caret" /></svg></button>
        </div>
    </section>

    <!-- File tabs -->
    <div class="flex h-[76px] shrink-0 items-center border-b-[9px] border-[#3b4453] pt-[6px]">
        <button aria-label="New drawing"><svg class="h-[30px] w-[30px]" viewBox="0 0 30 30"><path d="M0 15h30M15 0v30" stroke="#d9d9d9" stroke-width="5" /></svg></button>
        <svg class="ml-[26px] h-10 w-5" viewBox="0 0 20 40"><path d="M19 0L1 40" stroke="#4a5462" stroke-width="2" /></svg>
    </div>

    <!-- Drawing area -->
    <main class="relative min-h-0 flex-1 overflow-hidden bg-white">
        <svg class="absolute inset-0 h-full w-full">
            <defs>
                <pattern id="board" x="1124" y="383" width="164" height="164" patternUnits="userSpaceOnUse">
                    <path d="M0 0h164v164H0z" fill="#c7c8ca" />
                    <path d="M82 0h82v82H82zM0 82h82v82H0z" fill="#000" stroke="#777" stroke-width="1" />
                </pattern>
            </defs>
            <!-- Grid -->
            <g fill="#bebebe">
                <rect x="304" y="0" width="1" height="100%" /><rect x="1943" y="0" width="1" height="100%" /><rect x="2763" y="0" width="1" height="100%" />
                <rect x="0" y="218" width="100%" height="1" />
            </g>
            <rect x="1124" y="0" width="1" height="383" fill="#4fa04f" />
            <rect x="1124" y="1039" width="1" height="500" fill="#a8a8b2" />
            <rect x="0" y="1038" width="1124" height="1" fill="#97979e" />
            <rect x="1780" y="1038" width="100%" height="1" fill="#94606a" />
            <!-- Checkerboard hatch -->
            <rect x="1124" y="383" width="656" height="656" fill="url(#board)" />
            <!-- UCS icon -->
            <path d="M1124 1026h-11v24h23v-11M1124 914v125h125M1126 879l15 15 15-15M1141 894v15M1254 1007l30 30M1284 1007l-30 30" fill="none" stroke="#222" stroke-width="1.500" />
            <!-- Crosshair -->
            <path d="M2009 595h84M2118 595h84M2105 499v84M2105 608v84M2093 583h25v25h-25z" fill="none" stroke="#ff3cff" stroke-width="1" shape-rendering="crispEdges" />
        </svg>

        <!-- Command window -->
        <section class="absolute right-[134px] bottom-[1px] left-[442px] flex h-[183px] overflow-hidden rounded-lg border-2 border-[#6a6f77] bg-[#6c727c] font-['DejaVu_Sans_Mono',monospace] text-[30px] leading-[38px]">
            <div class="flex w-[60px] shrink-0 flex-col items-center pr-1 text-[#e8e8e8]">
                <svg class="mt-3 ml-[2px] h-3 w-[46px]" viewBox="0 0 46 12"><path d="M0 2h46M0 10h46" stroke="#e8e8e8" stroke-width="4" stroke-dasharray="4 4" /></svg>
                <button aria-label="Close" class="mt-5"><svg class="h-6 w-6" viewBox="0 0 24 24"><path d="M2 2l20 20M22 2L2 22" stroke="#e8e8e8" stroke-width="5" /></svg></button>
                <button aria-label="Customize" class="-mt-px pt-[28px]"><svg class="h-10 w-10" viewBox="0 0 40 40"><path d="M5 36l20-20" stroke="#e8e8e8" stroke-width="7" stroke-linecap="round" /><path d="M32 1c-10-3-16 8-11 14 4 6 18 6 18-6l-8 5-4-4z" fill="#e8e8e8" /></svg></button>
            </div>
            <div class="flex flex-1 flex-col">
                <pre class="flex-1 bg-[#d9d9d9] pt-2 pl-1 font-['DejaVu_Sans_Mono',monospace] text-[#4e4e4e]">Command:
Command:
Command:  &lt;Grid on&gt;</pre>
                <div class="flex h-[53px] items-center border-t-2 border-[#6a6f77] bg-white pr-[10px] pl-[9px] text-[#999]">
                    <button aria-label="Recent commands" class="flex items-center gap-[5px]">
                        <svg class="h-8 w-10" viewBox="0 0 40 32"><path d="M1 1h38v30H1z" fill="#f5f5f5" stroke="#949494" stroke-width="2.500" /><path d="M1 1h38v7H1z" fill="#949494" /><path d="M5 12l8 4-8 5M15 24h10" fill="none" stroke="#949494" stroke-width="3" /><path d="M3 3h3v3H3z" fill="#fff" /></svg>
                        <svg class="h-[10px] w-5"><use href="#caret" /></svg>
                    </button>
                    <input type="text" aria-label="Command line" placeholder="Type a command" class="ml-4 min-w-0 flex-1 italic placeholder:text-[#a3a3a3]">
                    <button aria-label="Command history"><svg class="h-[10px] w-5 rotate-180"><use href="#caret" /></svg></button>
                </div>
            </div>
        </section>
    </main>

    <!-- Status bar -->
    <footer class="flex h-[86px] shrink-0 justify-between border-t-[10px] border-b border-t-[#3b4453] border-b-[#1d8fd0] text-[#d9d9d9]">
        <div class="flex items-start pt-[10px] pl-5">
            <svg class="h-10 w-5" viewBox="0 0 20 40"><path d="M18 0L1 40" stroke="#4a5462" stroke-width="2" /></svg>
            <button class="mx-5 text-[#f5f5f5]">Layout2</button>
            <svg class="h-10 w-5" viewBox="0 0 20 40"><path d="M18 0L1 40" stroke="#4a5462" stroke-width="2" /></svg>
            <button aria-label="New layout" class="mx-[25px]"><svg class="h-10 w-8" viewBox="0 0 32 40"><path d="M1 20h30M16 5v30" stroke="#d9d9d9" stroke-width="5" /></svg></button>
            <svg class="h-10 w-5" viewBox="0 0 20 40"><path d="M18 0L1 40" stroke="#4a5462" stroke-width="2" /></svg>
        </div>
        <div class="mt-1 flex h-[60px] shrink-0">
            <button class="w-[120px] bg-[#3b4453] text-[29px] text-[#f5f5f5]">MODEL</button>
            <div class="ml-[6px] flex items-center bg-[#3b4453]">
                <button aria-label="Grid" class="mx-[2px] flex h-14 w-14 items-center justify-center bg-[#5f8dc0]"><svg class="h-10 w-10" viewBox="0 0 40 40"><path d="M9 1v38M20 1v38M31 1v38M1 9h38M1 20h38M1 31h38" stroke="#fff" stroke-width="3" /></svg></button>
                <button aria-label="Snap" class="flex w-[60px] justify-center"><svg class="h-10 w-10" viewBox="0 0 40 40"><path d="M5 7h31M5 20h31M5 33h31" stroke="currentColor" stroke-width="5" stroke-dasharray="5 8" /></svg></button>
                <button aria-label="Snap options" class="flex w-10 justify-center"><svg class="h-[10px] w-5"><use href="#caret" /></svg></button>
            </div>
            <button aria-label="Infer constraints" class="ml-[6px] flex w-[60px] items-center justify-center bg-[#3b4453]"><svg class="h-10 w-10" viewBox="0 0 40 40"><path d="M1 25h20v15H1z" fill="currentColor" /><path d="M20 26V1h18v13H20" fill="none" stroke="currentColor" stroke-width="2.500" /></svg></button>
            <button aria-label="Dynamic input" class="ml-[2px] flex w-[60px] items-center justify-center bg-[#3b4453]"><svg class="h-10 w-10" viewBox="0 0 40 40"><path d="M0 13h18M9 5v17" stroke="currentColor" stroke-width="2.500" /><path d="M15 25h25v10H15z" fill="currentColor" /><path d="M18 27h2v6h-2z" fill="#3b4453" /></svg></button>
            <div class="ml-[2px] flex items-center bg-[#3b4453]">
                <button aria-label="Ortho" class="flex w-[60px] justify-center"><svg class="h-10 w-10" viewBox="0 0 40 40" fill="none" stroke="currentColor" stroke-width="2.500"><path d="M1 0v39h39M1 26h13v13" /></svg></button>
                <button aria-label="Polar tracking" class="flex w-[60px] justify-center"><svg class="h-10 w-10" viewBox="0 0 40 40" fill="none" stroke="currentColor" stroke-width="2.500"><circle cx="16" cy="21" r="15" /><path d="M34 3L16 21h24" /></svg></button>
                <button aria-label="Polar options" class="flex w-10 justify-center"><svg class="h-[10px] w-5"><use href="#caret" /></svg></button>
                <button aria-label="Isometric drafting" class="flex w-[60px] justify-center"><svg class="h-10 w-10" viewBox="0 0 40 40"><path d="M4 3l32 31" stroke="#e86a6a" stroke-width="2.500" /><path d="M20 0v38" stroke="#5fd080" stroke-width="2.500" /><path d="M17 16h6v6h-6z" fill="#3b4453" stroke="#d9d9d9" stroke-width="2" /></svg></button>
                <button aria-label="Isometric options" class="flex w-10 justify-center"><svg class="h-[10px] w-5"><use href="#caret" /></svg></button>
            </div>
            <div class="ml-[2px] flex items-center bg-[#3b4453]">
                <button aria-label="Object snap tracking" class="flex w-[60px] justify-center"><svg class="h-10 w-10" viewBox="0 0 40 40"><path d="M29 5L3 34h37" fill="none" stroke="currentColor" stroke-width="2.500" /><path d="M13 15h7v7h-7z" fill="currentColor" /></svg></button>
                <button aria-label="Object snap" class="mx-[2px] flex h-14 w-14 items-center justify-center bg-[#5f8dc0]"><svg class="h-10 w-10" viewBox="0 0 40 40" fill="none" stroke="#fff" stroke-width="3"><path d="M1 1h9v10H1zM14 6h24v32H5V15" /></svg></button>
                <button aria-label="Object snap options" class="flex w-10 justify-center"><svg class="h-[10px] w-5"><use href="#caret" /></svg></button>
            </div>
            <button aria-label="Lineweight" class="ml-[2px] flex w-[60px] items-center justify-center bg-[#3b4453]"><svg class="h-10 w-10" viewBox="0 0 40 40"><path d="M0 3h40v2H20v3H0zM0 13h40v2H20v6H0zM0 26h40v2H20v8H0z" fill="currentColor" /></svg></button>
            <button aria-label="Transparency" class="ml-[2px] flex w-[60px] items-center justify-center bg-[#3b4453]"><svg class="h-10 w-10" viewBox="0 0 40 40"><path d="M1 1h38v38H1z" fill="none" stroke="currentColor" stroke-width="2.500" /><path d="M5 5h7v7H5zM20 5h7v7h-7zM12 12h8v8h-8zM27 12h8v8h-8zM5 20h7v7H5zM20 20h7v7h-7zM12 27h8v8h-8zM27 27h8v8h-8z" fill="currentColor" /></svg></button>
            <button aria-label="Selection cycling" class="ml-[2px] flex w-[60px] items-center justify-center border-2 border-[#3b4453] bg-[#5f8dc0]"><svg class="h-10 w-10" viewBox="0 0 40 40"><path d="M0 6h12M6 0v12M10 35V11h26" fill="none" stroke="#fff" stroke-width="2.500" /><path d="M15 15h25v25H15z" fill="#fff" /></svg></button>
            <div class="ml-[2px] flex items-center bg-[#3b4453]">
                <button aria-label="3D object snap" class="flex w-[60px] justify-center"><svg class="h-10 w-10" viewBox="0 0 40 40"><path d="M6 24V12h24v22H16M6 12l8-11h25L30 12M39 1v23l-9 10" fill="none" stroke="currentColor" stroke-width="2.500" /><path d="M1 28h10v11H1z" fill="none" stroke="#f5b078" stroke-width="2.500" /></svg></button>
                <button aria-label="3D object snap options" class="flex w-10 justify-center"><svg class="h-[10px] w-5"><use href="#caret" /></svg></button>
            </div>
            <button aria-label="Dynamic UCS" class="ml-[6px] flex w-[60px] items-center justify-center border-2 border-[#3b4453] bg-[#5f8dc0]"><svg class="h-10 w-10" viewBox="0 0 40 40"><path d="M6 6v27h26" fill="none" stroke="#fff" stroke-width="3" /><path d="M0 10L6 0l6 10zM30 27l10 6-10 6z" fill="#fff" /><path d="M23 6L16 18h5l-2 10 10-14h-5l3-8z" fill="#fff" /></svg></button>
            <div class="ml-[6px] flex items-center bg-[#3b4453]">
                <button aria-label="Annotation visibility" class="mx-[2px] flex h-14 w-14 items-center justify-center bg-[#5f8dc0] text-white"><svg class="h-10 w-10" viewBox="0 0 40 40"><use href="#compass" x="-3" width="40" height="40" /><circle cx="32" cy="9" r="7" fill="none" stroke="#fff" stroke-width="2.500" /></svg></button>
                <button aria-label="Auto scale" class="flex w-[60px] justify-center"><svg class="h-10 w-10" viewBox="0 0 40 40"><use href="#compass" x="-3" width="40" height="40" /><path d="M36 0L26 12h5l-2 9 11-13h-6z" fill="currentColor" /></svg></button>
                <button aria-label="Annotation scale" class="flex w-[60px] justify-center"><svg class="h-10 w-10"><use href="#compass" /></svg></button>
                <button class="flex w-[84px] items-center justify-center gap-[10px] text-[#f5f5f5]"><span>1:1</span><svg class="h-[10px] w-5 text-[#d9d9d9]"><use href="#caret" /></svg></button>
            </div>
            <div class="ml-[6px] flex items-center bg-[#3b4453]">
                <button aria-label="Workspace switching" class="flex w-[60px] justify-center"><svg class="h-10 w-10" viewBox="0 0 40 40" fill="none" stroke="currentColor"><circle cx="20" cy="20" r="11" stroke-width="9" /><circle cx="20" cy="20" r="16" stroke-width="6" stroke-dasharray="6.300 6.266" stroke-dashoffset="3.150" /></svg></button>
                <button aria-label="Workspace list" class="flex w-10 justify-center"><svg class="h-[10px] w-5"><use href="#caret" /></svg></button>
            </div>
            <button aria-label="Annotation monitor" class="ml-[2px] flex w-[60px] items-center justify-center bg-[#3b4453]"><svg class="h-10 w-10" viewBox="0 0 40 40"><path d="M0 20h40M20 0v40" stroke="currentColor" stroke-width="5" /></svg></button>
            <button aria-label="Units" class="ml-[6px] flex w-[31px] items-center justify-end overflow-hidden bg-[#3b4453]"><svg class="h-10 w-[11px]" viewBox="0 0 11 40"><path d="M0 0h11v40H0z" fill="currentColor" /><path d="M11 3h-1v8h1zM11 16h-2v8h2z" fill="#3b4453" /></svg></button>
        </div>
    </footer>

    <!-- Taskbar -->
    <nav class="flex h-[120px] shrink-0 items-center border-t-4 border-[#b5b5b5] bg-gradient-to-r from-[#dcdcdc] via-[#e4e4e4] to-[#dadada] pb-[3px] pl-[379px] text-[32px] text-[#5c5c5c]">
        <button aria-label="Start"><svg class="h-[58px] w-[58px]" viewBox="0 0 58 58"><path d="M2 0h25v27H0V2zM30 0h26l2 2v25H30zM0 30h27v28H2l-2-2zM30 30h28v26l-2 2H30z" fill="url(#winGrad)" /></svg></button>
        <label class="ml-[34px] flex h-20 w-[547px] items-center gap-6 rounded-full border-2 border-t-[3px] border-b-[3px] border-[#cfcfcf] border-b-[#b9b9b9] bg-[#f6f6f6] pl-7">
            <svg class="h-[38px] w-[38px]" viewBox="0 0 38 38"><circle cx="16" cy="16" r="14" fill="none" stroke="#2a2a2a" stroke-width="4" /><path d="M26 27l9 9" stroke="#2a2a2a" stroke-width="5" stroke-linecap="round" /></svg>
            <input type="text" aria-label="Procurar" placeholder="Procurar" class="min-w-0 flex-1 placeholder:text-[#5c5c5c]">
        </label>
        <div class="ml-[7px] flex">
            <button aria-label="Task view" class="flex w-[110px] flex-col items-center pt-[17px]">
                <svg class="h-[60px] w-[60px]" viewBox="0 0 60 60"><rect y="18" width="45" height="40" rx="2" fill="#2b2b2b" /><rect x="15" y="3" width="45" height="39" rx="2" fill="#f6f6f6" /><path d="M15 18h30v24H15z" fill="#bdbdbd" /></svg><span class="mt-[9px] h-2 w-4"></span></button>
            <button aria-label="Edge" class="flex w-[110px] flex-col items-center pt-[17px]">
                <svg class="h-[60px] w-[60px]" viewBox="0 0 60 60"><path d="M0 30C0 10 26 10 34 23c-9-1-14 5-15 17l14 20h-3C12 60 0 46 0 30z" fill="#0a80d8" /><path d="M23 26c-9 5-10 22 2 31 11 6 24 0 31-12 0-1-1-1-2 0-16 6-32-4-31-19z" fill="#1052a0" /><path d="M1 23C5 8 17 0 30 0c16 0 30 11 30 28 0 8-7 12-15 12-6 0-11-2-10-4 3-3 3-7 0-11C30 17 22 14 14 15 8 16 3 19 1 23z" fill="url(#edgeTop)" /></svg><span class="mt-[9px] h-2 w-4"></span></button>
            <button aria-label="Copilot" class="flex w-[110px] flex-col items-center pt-[17px]">
                <svg class="h-[60px] w-[60px]" viewBox="0 0 60 60"><path d="M36 3c6 0 8 3 9 9 1 4 2 5 5 6H36c-4 0-7 2-8 4l3-13c1-4 2-6 5-6z" fill="#1238c8" /><path d="M14 42h10c4 0 6-2 7-4l-4 12c-1 5-2 7-5 7-4 0-5-4-6-9-1-4-1-5-2-6z" fill="#f0553a" /><path d="M12 3h24c-4 0-6 3-7 7l-7 28c-1 3-3 4-5 4H5c-5 0-5-6-4-11l5-19c2-6 3-9 6-9z" fill="url(#copLeft)" /><path d="M44 18h10c6 0 6 5 5 10l-5 19c-2 7-4 10-8 10H24c4 0 6-3 7-7l7-27c1-3 3-5 6-5z" fill="url(#copRight)" /></svg><span class="mt-[9px] h-2 w-4"></span></button>
            <button aria-label="File Explorer" class="flex w-[110px] flex-col items-center pt-[17px]">
                <svg class="h-[60px] w-[60px]" viewBox="0 0 60 60"><path d="M0 6l2-2h16l6 6h36v10H0z" fill="#dfa000" /><path d="M0 14h20l5-4h33l2 2v43l-2 2H2l-2-2z" fill="url(#folder)" /><path d="M10 57V46q0-6 6-6h28q6 0 6 6v11z" fill="#0f78cc" /><path d="M18 49h24" stroke="#0b4a8c" stroke-width="2" /></svg><span class="mt-[9px] h-2 w-[15px] rounded bg-[#808080]"></span></button>
            <button aria-label="Microsoft Store" class="flex w-[110px] flex-col items-center pt-[17px]">
                <svg class="h-[60px] w-[60px]" viewBox="0 0 60 60"><path d="M1 9h58v40q0 10-10 10H11Q1 59 1 49z" fill="url(#store)" /><path d="M17 13V3h26v10" fill="none" stroke="#2cc8fa" stroke-width="4" /><path d="M19 23h10v10H19z" fill="#f25022" /><path d="M31 23h10v10H31z" fill="#7fba00" /><path d="M19 35h10v10H19z" fill="#00a4ef" /><path d="M31 35h10v10H31z" fill="#ffb900" /></svg><span class="mt-[9px] h-2 w-4"></span></button>
            <button aria-label="WhatsApp" class="relative flex w-[110px] flex-col items-center pt-[17px]">
                <svg class="h-[60px] w-[60px]" viewBox="0 0 60 60"><path d="M3 57l4-15C-4 20 13 2 31 3c16 0 27 13 26 28-2 22-24 32-41 23z" fill="none" stroke="#1f8f5c" stroke-width="5" /><path d="M20 16c-6 2-6 9-2 15 5 8 11 13 19 13 6 0 8-3 8-8l-8-4-4 4c-5-2-8-6-10-10l3-4z" fill="#1f8f5c" /></svg><span class="mt-[9px] h-2 w-4"></span>
                <span class="absolute top-[5px] right-[12px] h-10 w-10 rounded-full bg-[#0078d7] text-center text-[28px] leading-[40px] text-white">4</span></button>
            <button aria-label="Word" class="flex w-[110px] flex-col items-center pt-[17px]">
                <svg class="h-[60px] w-[60px]" viewBox="0 0 60 60"><path d="M14 3h43v14H14z" fill="#41a5ee" /><path d="M14 16h43v14H14z" fill="#2b7cd3" /><path d="M14 30h43v14H14z" fill="#185abd" /><path d="M14 43h43v14H14z" fill="#103f91" /><rect y="15" width="30" height="30" rx="2" fill="#1e5cbf" /><text x="15" y="38" text-anchor="middle" fill="#fff" font-size="21" font-weight="700">W</text></svg><span class="mt-[9px] h-2 w-4"></span></button>
            <button aria-label="Excel" class="flex w-[110px] flex-col items-center pt-[17px]">
                <svg class="h-[60px] w-[60px]" viewBox="0 0 60 60"><path d="M14 3h22v14H14zM36 16h22v14H36z" fill="#21a366" /><path d="M36 3h22v14H36z" fill="#33c481" /><path d="M14 16h22v28H14zM36 30h22v14H36z" fill="#107c41" /><path d="M14 43h44v14H14z" fill="#185c37" /><rect y="15" width="30" height="30" rx="2" fill="#117d42" /><text x="15" y="38" text-anchor="middle" fill="#fff" font-size="22" font-weight="700">X</text></svg><span class="mt-[9px] h-2 w-4"></span></button>
            <button aria-label="PowerPoint" class="flex w-[110px] flex-col items-center pt-[17px]">
                <svg class="h-[60px] w-[60px]" viewBox="0 0 60 60"><circle cx="32" cy="30" r="27" fill="#d35230" /><path d="M32 3v27H5A27 27 0 0132 3z" fill="#ed6c47" /><path d="M32 3v27h27A27 27 0 0032 3z" fill="#ff8f6b" /><rect y="15" width="30" height="30" rx="2" fill="#c43e1c" /><text x="15" y="38" text-anchor="middle" fill="#fff" font-size="22" font-weight="700">P</text></svg><span class="mt-[9px] h-2 w-4"></span></button>
            <button aria-label="Publisher" class="flex w-[110px] flex-col items-center pt-[17px]">
                <svg class="h-[60px] w-[60px]" viewBox="0 0 60 60"><path d="M40 7h20v46H40z" fill="#038387" /><path d="M14 3h35v27H14z" fill="#37c6d0" /><path d="M14 30h35v14H14z" fill="#1a9ba1" /><path d="M14 43h35v14H14z" fill="#038387" /><rect y="15" width="30" height="30" rx="2" fill="#0a7a80" /><text x="15" y="38" text-anchor="middle" fill="#fff" font-size="22" font-weight="700">P</text></svg><span class="mt-[9px] h-2 w-4"></span></button>
            <button aria-label="Chrome" class="flex w-[110px] flex-col items-center pt-[17px]">
                <svg class="h-[60px] w-[60px]" viewBox="0 0 60 60"><circle cx="30" cy="30" r="30" fill="#fdc221" /><path d="M4 15A30 30 0 0156 15H30L17 38z" fill="#ea4335" /><path d="M4 15l13 23q6 9 21 5L30 60A30 30 0 014 15z" fill="#27963f" /><circle cx="30" cy="30" r="15" fill="#fff" /><circle cx="30" cy="30" r="12" fill="#2f7ded" /></svg><span class="mt-[9px] h-2 w-[15px] rounded bg-[#808080]"></span></button>
            <button aria-label="AutoCAD" class="flex w-[110px] flex-col items-center pt-[17px]">
                <svg class="h-[60px] w-[60px]" viewBox="0 0 60 60"><path d="M8 9h51v51H8z" fill="#7d0c2c" /><path d="M2 6l9-6v42l-9 5z" fill="#e94a80" /><path d="M11 0h42l2 2v40H11z" fill="#e51050" /><text x="33" y="33" text-anchor="middle" fill="#fff" font-size="32" font-weight="700">A</text><text x="33" y="55" text-anchor="middle" fill="#fff" font-size="13" font-weight="700">CAD</text></svg><span class="mt-[9px] h-2 w-[15px] rounded bg-[#808080]"></span></button>
            <button aria-label="3ds Max" class="flex w-[110px] flex-col items-center pt-[17px]">
                <svg class="h-[60px] w-[60px]" viewBox="0 0 60 60"><path d="M8 9h51v51H8z" fill="#376b84" /><path d="M2 6l9-6v42l-9 5z" fill="#7cc8e0" /><path d="M11 0h42l2 2v40H11z" fill="#37a5cc" /><text x="33" y="33" text-anchor="middle" fill="#fff" font-size="32" font-weight="700">3</text><text x="33" y="55" text-anchor="middle" fill="#fff" font-size="13" font-weight="700">MAX</text></svg><span class="mt-[9px] h-2 w-4"></span></button>
            <button aria-label="Sticky Notes" class="flex w-[110px] flex-col items-center pt-[17px]">
                <svg class="h-[60px] w-[60px]" viewBox="0 0 60 60"><rect x="4" y="4" width="52" height="52" rx="2" fill="#414141" /><path d="M30 56V30h26z" fill="#ffd800" /><path d="M30 56l26-26v26z" fill="#2c2c2c" /></svg><span class="mt-[9px] h-2 w-[15px] rounded bg-[#808080]"></span></button>
            <button aria-label="FileZilla" class="flex w-[110px] flex-col items-center pt-[17px]">
                <svg class="h-[60px] w-[60px]" viewBox="0 0 60 60"><path d="M1 1h58v58H1z" fill="#b00000" stroke="#b00000" stroke-width="2" stroke-dasharray="3 2" /><path d="M12 48L20 10h24M17 28h18M30 28h18L28 50h17" fill="none" stroke="#fff" stroke-width="7" /></svg><span class="mt-[9px] h-2 w-[15px] rounded bg-[#808080]"></span></button>
            <button aria-label="Visual Studio Code" class="flex w-[110px] flex-col items-center pt-[17px]">
                <svg class="h-[60px] w-[60px]" viewBox="0 0 60 60"><path d="M44 0l2 17L7 45l-6-5v-4z" fill="#0070b8" /><path d="M7 14l39 29-2 17L1 24v-5z" fill="#0a8ad8" /><path d="M44 0l14 7 2 3v40l-2 3-14 7z" fill="#26a9f2" /></svg><span class="mt-[9px] h-2 w-[15px] rounded bg-[#808080]"></span></button>
        </div>
    </nav>
</body>

</html>
